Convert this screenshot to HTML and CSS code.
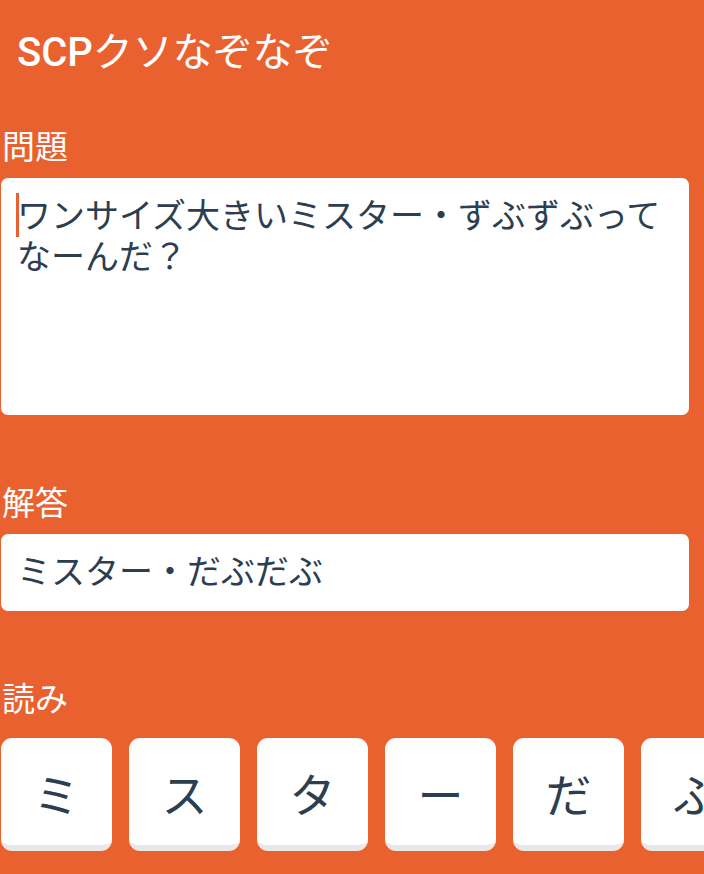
FILE: index.html
```html
<!DOCTYPE html>
<html lang="ja">
<head>
<meta charset="utf-8">
<title>SCPクソなぞなぞ</title>
<link rel="stylesheet" href="styles.css">
</head>
<body>
<div class="page">
  <header class="appbar"><span class="latin">SCP</span>クソなぞなぞ</header>
  <section class="section first">
    <div class="label">問題</div>
    <div class="field area"><span class="caret"></span>ワンサイズ大きいミスター・ずぶずぶってなーんだ？</div>
  </section>
  <section class="section">
    <div class="label">解答</div>
    <div class="field input">ミスター・だぶだぶ</div>
  </section>
  <section class="section">
    <div class="label">読み</div>
    <div class="tiles">
      <div class="tile">ミ</div>
      <div class="tile">ス</div>
      <div class="tile">タ</div>
      <div class="tile">ー</div>
      <div class="tile">だ</div>
      <div class="tile">ぶ</div>
      <div class="tile">だ</div>
      <div class="tile">ぶ</div>
    </div>
  </section>
</div>
</body>
</html>
```
FILE: styles.css
```css
html, body {
  margin: 0;
  padding: 0;
  background: #ea6130;
}
body {
  font-family: Roboto, "Noto Sans CJK JP", sans-serif;
  width: 704px;
  height: 874px;
  overflow: hidden;
}
.page {
  padding: 0 15px 0 1px;
}
.appbar {
  color: #fff;
  font-size: 40px;
  font-weight: 400;
  line-height: 50px;
  padding: 28px 0 0 16px;
  height: 76px;
}
.appbar .latin {
  font-weight: 500;
}
.section {
  margin-top: 69px;
}
.section.first {
  margin-top: 24px;
}
.label {
  color: #fff;
  font-size: 33px;
  line-height: 40px;
  padding-left: 1px;
  margin-bottom: 10px;
}
.field {
  background: #fff;
  border-radius: 7px;
  color: #2c3e50;
  font-size: 34px;
  line-height: 41px;
  padding: 0 16px;
  position: relative;
}
.area {
  height: 237px;
  box-sizing: border-box;
  padding-top: 18px;
}
.caret {
  position: absolute;
  left: 15px;
  top: 15px;
  width: 3px;
  height: 44px;
  background: #ea6130;
}
.input {
  height: 77px;
  display: flex;
  align-items: center;
}
.tiles {
  display: flex;
  gap: 17px;
  margin-right: -15px;
  margin-top: 18px;
  overflow: hidden;
}
.tile {
  flex: 0 0 111px;
  height: 107px;
  background: #fff;
  border-bottom: 6px solid #e8e8e8;
  border-radius: 11px;
  color: #2c3e50;
  font-size: 46px;
  display: flex;
  align-items: center;
  justify-content: center;
}
```
